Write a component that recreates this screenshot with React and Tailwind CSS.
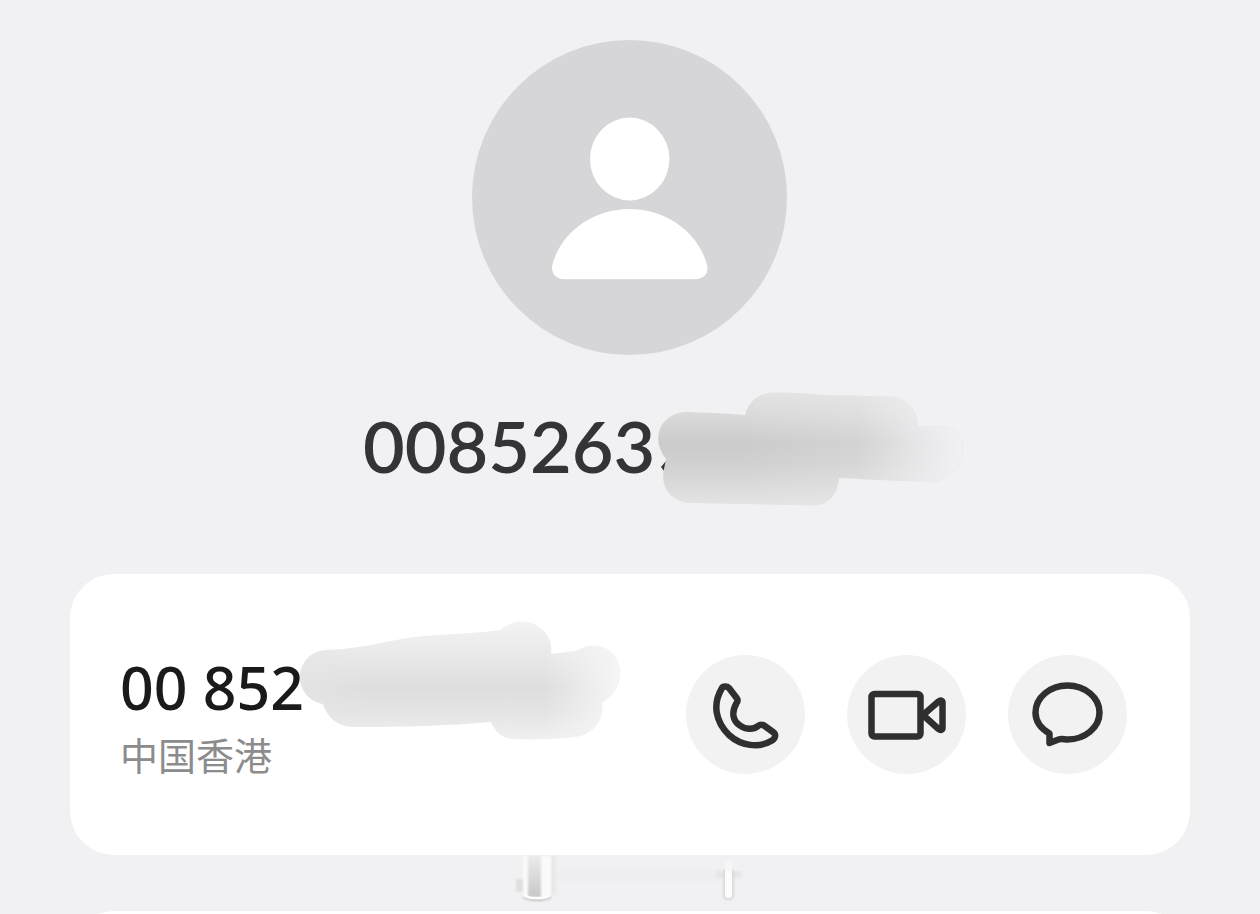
import React from "react";

const Avatar = () => (
  <svg viewBox="0 0 316 315" className="w-[316px] h-[315px]" role="img" aria-label="Contact">
    <circle cx="157.500" cy="157.500" r="157.500" fill="#d6d6d8" />
    <ellipse cx="157.700" cy="119" rx="39.700" ry="41.500" fill="#fff" />
    <path
      d="M157.700 169C195 169 226 193 234.800 224C237 232 234 239.200 222 239.200H93C83 239.200 78.500 232 80.500 224C89 193 120 169 157.700 169Z"
      fill="#fff"
    />
  </svg>
);

const TitleSmudge = () => (
  <svg viewBox="0 0 340 140" className="absolute left-[277px] -top-[15px] w-[340px] h-[140px]" aria-hidden="true">
    <defs>
      <linearGradient id="titleTone" x1="0" y1="0" x2="0" y2="140" gradientUnits="userSpaceOnUse">
        <stop offset="0.09" stopColor="#e2e2e3" />
        <stop offset="0.26" stopColor="#d9d9da" />
        <stop offset="0.45" stopColor="#cbcbcc" />
        <stop offset="0.6" stopColor="#d0d0d1" />
        <stop offset="0.75" stopColor="#dadadb" />
        <stop offset="0.9" stopColor="#e4e4e5" />
      </linearGradient>
      <linearGradient id="titleFade" x1="0" y1="0" x2="340" y2="0" gradientUnits="userSpaceOnUse">
        <stop offset="0.3" stopColor="#f1f1f3" stopOpacity="0" />
        <stop offset="0.64" stopColor="#f1f1f3" stopOpacity="0.2" />
        <stop offset="0.8" stopColor="#f1f1f3" stopOpacity="0.66" />
        <stop offset="0.94" stopColor="#f1f1f3" stopOpacity="1" />
      </linearGradient>
      <path
        id="titleShape"
        d="M46 32C52 31.500 55 33 62 32.500C76 33 92 34 105 35C108 22 119 13 133 12.500C151 12 169 14 187 15L250 16.500C266 17 278 30 278 46H299C336 47 328 102 290 102L240 100L199 98C198 114 189 125 174 125.500L50 123C31 122 20 107 24 89L26 79C8 56 24 32 46 32Z"
      />
    </defs>
    <path d="M21 87L26 81L29 83V90L24 91Z" fill="#343436" />
    <use href="#titleShape" fill="url(#titleTone)" />
    <use href="#titleShape" fill="url(#titleFade)" />
  </svg>
);

const NumberSmudge = () => (
  <svg viewBox="0 0 340 150" className="absolute left-[170px] -top-[36px] w-[340px] h-[150px]" aria-hidden="true">
    <defs>
      <linearGradient id="numberTone" x1="0" y1="0" x2="0" y2="150" gradientUnits="userSpaceOnUse">
        <stop offset="0.07" stopColor="#f3f3f3" />
        <stop offset="0.26" stopColor="#ebebeb" />
        <stop offset="0.52" stopColor="#dedede" />
        <stop offset="0.68" stopColor="#e4e4e4" />
        <stop offset="0.86" stopColor="#f0f0f0" />
      </linearGradient>
      <linearGradient id="numberFade" x1="0" y1="0" x2="340" y2="0" gradientUnits="userSpaceOnUse">
        <stop offset="0.03" stopColor="#e6e6e6" stopOpacity="0.7" />
        <stop offset="0.22" stopColor="#e6e6e6" stopOpacity="0" />
        <stop offset="0.75" stopColor="#f5f5f5" stopOpacity="0" />
        <stop offset="0.96" stopColor="#f5f5f5" stopOpacity="1" />
      </linearGradient>
      <path
        id="numberShape"
        d="M38 40C74 39 101 29 134 26C161 24 188 23 211 20C233 0 265 18 261 44L286 41C309 27 331 43 330 64C329 77 322 87 312 92C314 112 302 125 285 127C264 129 242 130 221 129C210 128 204 119 201 112C158 116 112 117 67 117C48 118 38 108 33 94C17 91 10 78 10 67C10 51 23 40 38 40Z"
      />
    </defs>
    <use href="#numberShape" fill="url(#numberTone)" />
    <use href="#numberShape" fill="url(#numberFade)" />
  </svg>
);

const GapSmudge = () => (
  <svg viewBox="0 0 280 56" className="w-[280px] h-[56px]" aria-hidden="true">
    <defs>
      <linearGradient id="barTone" x1="0" y1="0" x2="0" y2="1">
        <stop offset="0" stopColor="#ececed" />
        <stop offset="1" stopColor="#c8c8c9" />
      </linearGradient>
      <linearGradient id="thinTone" x1="0" y1="0" x2="0" y2="1">
        <stop offset="0" stopColor="#fcfcfc" stopOpacity="0" />
        <stop offset="0.35" stopColor="#fcfcfc" />
      </linearGradient>
      <filter id="soft" x="-50%" y="-50%" width="200%" height="200%">
        <feGaussianBlur stdDeviation="1.200" />
      </filter>
      <filter id="softer" x="-50%" y="-50%" width="200%" height="200%">
        <feGaussianBlur stdDeviation="3" />
      </filter>
    </defs>
    <rect x="66" y="15" width="170" height="11" fill="#eeeef0" filter="url(#softer)" />
    <rect x="226" y="16" width="26" height="7" fill="#e6e6e8" filter="url(#soft)" />
    <rect x="26" y="24" width="10" height="13" fill="#dfdfe1" filter="url(#soft)" />
    <rect x="59" y="0" width="7" height="40" fill="#e8e8ea" filter="url(#soft)" />
    <path d="M33 42C40 46 54 46 61 42" stroke="#b4b4b4" strokeWidth="2" fill="none" filter="url(#soft)" />
    <path d="M33 1H61V41C53 44 41 44 33 41Z" fill="#fafafa" filter="url(#soft)" />
    <rect x="38" y="0" width="13" height="42" fill="url(#barTone)" filter="url(#soft)" />
    <path d="M35 41C42 44 52 44 59 41" stroke="#fff" strokeWidth="2" fill="none" />
    <rect x="233" y="14" width="11" height="31" rx="4" fill="#dadadc" filter="url(#soft)" />
    <rect x="235" y="4" width="7" height="39" rx="3" fill="url(#thinTone)" />
  </svg>
);

const iconProps = {
  viewBox: "0 0 119 119",
  className: "w-[119px] h-[119px]",
  fill: "none",
  stroke: "#2f2f2f",
  strokeWidth: 6.5,
  strokeLinejoin: "round",
  strokeLinecap: "round",
  "aria-hidden": true,
};

const actions = [
  {
    label: "Call",
    icon: (
      <svg {...iconProps}>
        <path d="M36 33C37 31 41 31 43 33L51 43.500C52 45 51.500 46.500 50.500 48C45 58 47 66 54 70.500C60 75 68 74.500 72 71C74 69.500 76 69.500 78 70.500L87 77C90 79 90 83 86 85.500C73 93.500 55 91 43 80C29 66 26.500 49 36 33Z" />
      </svg>
    ),
  },
  {
    label: "Video call",
    icon: (
      <svg {...iconProps}>
        <rect x="24.500" y="39" width="49" height="42.500" rx="3" />
        <path d="M76 60L91.500 46.500C93.500 45 95.500 45.500 95.500 47.500V73C95.500 75 93.500 75.500 91.500 74Z" />
      </svg>
    ),
  },
  {
    label: "Message",
    icon: (
      <svg {...iconProps}>
        <path d="M59.500 30.500C77 30.500 91.500 42.500 91.500 57.500C91.500 72.500 77 84.500 59.500 84.500C56.500 84.500 54 83.500 50.500 84.500L41.500 88V78.500C33 73.500 27.500 66 27.500 57.500C27.500 42.500 42 30.500 59.500 30.500Z" />
      </svg>
    ),
  },
];

const App = () => {
  return (
    <main className="h-screen overflow-hidden bg-[#f1f1f3] flex flex-col pt-10">
      <header className="flex flex-col items-center shrink-0">
        <Avatar />
        <div className="relative w-[534px] mt-10">
          <h1 className="font-['Lato',sans-serif] font-semibold text-[72px] leading-[100px] text-[#343436]">
            0085263
          </h1>
          <TitleSmudge />
        </div>
      </header>

      <section className="mx-[70px] mt-[79px] min-h-[281px] shrink-0 bg-white rounded-[44px] pl-[50px] pr-[63px] flex items-center justify-between">
        <div className="relative pb-1">
          <p className="font-['Noto_Sans',sans-serif] font-medium text-[59px] leading-[82px] text-[#1a1a1a]">
            00 852
          </p>
          <NumberSmudge />
          <p lang="zh-CN" className="font-['Noto_Sans_CJK_SC',sans-serif] text-[38px] leading-[52px] text-[#8c8c8c]">
            中国香港
          </p>
        </div>
        <div className="flex gap-[42px]">
          {actions.map((item) => (
            <button
              key={item.label}
              type="button"
              aria-label={item.label}
              className="w-[119px] h-[119px] rounded-full bg-[#f2f2f2]"
            >
              {item.icon}
            </button>
          ))}
        </div>
      </section>

      <div className="flex justify-center shrink-0">
        <GapSmudge />
      </div>

      <section className="mx-[70px] h-24 shrink-0 bg-white rounded-t-[44px]" />
    </main>
  );
};

export default App;
